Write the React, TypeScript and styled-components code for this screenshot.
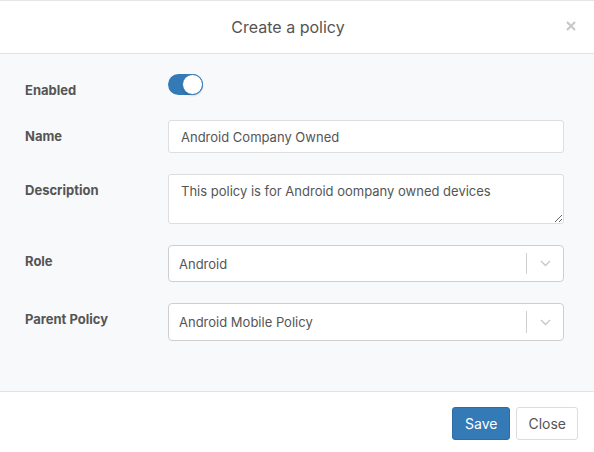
import React, { useState } from "react";
import styled, { createGlobalStyle } from "styled-components";

const GlobalStyle = createGlobalStyle`
  html, body {
    margin: 0;
    padding: 0;
    background: #ffffff;
  }
  body {
    font-family: Inter, "Noto Sans", "Liberation Sans", sans-serif;
    color: #555555;
  }
`;

const Modal = styled.div`
  width: 594px;
  height: 452px;
  display: flex;
  flex-direction: column;
  background: #ffffff;
`;

const Header = styled.div`
  height: 52px;
  padding-right: 18px;
  border-top: 1px solid #e6e6e6;
  border-bottom: 1px solid #e3e3e3;
  display: flex;
  align-items: center;
  justify-content: center;
  position: relative;
`;

const Title = styled.h4`
  margin: 0;
  font-size: 16px;
  font-weight: 400;
  color: #555555;
`;

const CloseX = styled.button`
  position: absolute;
  right: 15px;
  top: 17px;
  width: 16px;
  height: 16px;
  padding: 0;
  border: none;
  background: none;
  color: #c8c8c8;
  cursor: pointer;
  display: flex;
  align-items: center;
  justify-content: center;
`;

const Body = styled.div`
  flex: 1;
  background: #f8f9fb;
  padding: 20px 30px 0 25px;
  display: flex;
  flex-direction: column;
  gap: 21px;
  border-bottom: 1px solid #e3e3e3;
`;

const Row = styled.div<{ $minHeight?: number }>`
  display: grid;
  grid-template-columns: 143px 1fr;
  align-items: start;
  min-height: ${(p) => (p.$minHeight ? `${p.$minHeight}px` : "auto")};
`;

const Label = styled.label`
  font-size: 13px;
  font-weight: 700;
  line-height: 16px;
  padding-top: 8px;
  color: #555555;
`;

const Track = styled.button<{ $on: boolean }>`
  width: 35px;
  height: 21px;
  border-radius: 11px;
  border: none;
  padding: 0;
  background: ${(p) => (p.$on ? "#337ab7" : "#cccccc")};
  display: flex;
  align-items: center;
  justify-content: ${(p) => (p.$on ? "flex-end" : "flex-start")};
  cursor: pointer;
`;

const Knob = styled.span`
  width: 19px;
  height: 19px;
  border-radius: 50%;
  background: #ffffff;
  border: 1px solid #337ab7;
  box-shadow: 0 1px 2px rgba(0, 0, 0, 0.15);
`;

const TextInput = styled.input`
  box-sizing: border-box;
  width: 100%;
  height: 33px;
  padding: 0 12px;
  border: 1px solid #dedede;
  border-radius: 3px;
  background: #ffffff;
  font-family: inherit;
  font-size: 13px;
  color: #555555;
  outline: none;
`;

const TextArea = styled.textarea`
  box-sizing: border-box;
  width: 100%;
  height: 50px;
  padding: 8px 12px;
  border: 1px solid #dedede;
  border-radius: 3px;
  background: #ffffff;
  font-family: inherit;
  font-size: 13px;
  line-height: 16px;
  color: #555555;
  outline: none;
`;

const SelectBox = styled.div<{ $height: number }>`
  box-sizing: border-box;
  width: 100%;
  height: ${(p) => p.$height}px;
  border: 1px solid #cfcfcf;
  border-radius: 4px;
  background: #ffffff;
  display: flex;
  align-items: center;
`;

const SelectValue = styled.div`
  flex: 1;
  padding-left: 10px;
  font-size: 13px;
  color: #555555;
`;

const Separator = styled.span`
  width: 1px;
  align-self: stretch;
  margin: 7px 0;
  background: #d0d0d0;
`;

const Indicator = styled.div`
  width: 36px;
  display: flex;
  align-items: center;
  justify-content: center;
  color: #c8c8c8;
`;

const Footer = styled.div`
  height: 60px;
  display: flex;
  justify-content: flex-end;
  align-items: flex-start;
  gap: 6px;
  padding: 15px 16px 0 0;
  box-sizing: border-box;
`;

const Button = styled.button<{ $primary?: boolean }>`
  height: 33px;
  padding: 0 ${(p) => (p.$primary ? 12 : 11)}px;
  border-radius: 3px;
  border: 1px solid ${(p) => (p.$primary ? "#2e6da4" : "#dddddd")};
  background: ${(p) => (p.$primary ? "#337ab7" : "#ffffff")};
  color: ${(p) => (p.$primary ? "#ffffff" : "#555555")};
  font-family: inherit;
  font-size: 14px;
  cursor: pointer;
`;

const Chevron = () => (
  <svg width="11" height="7" viewBox="0 0 11 7" fill="none">
    <path d="M1 1l4.5 4.5L10 1" stroke="currentColor" strokeWidth="1.4" />
  </svg>
);

const Select = ({ value, height }: { value: string; height: number }) => (
  <SelectBox $height={height}>
    <SelectValue>{value}</SelectValue>
    <Separator />
    <Indicator>
      <Chevron />
    </Indicator>
  </SelectBox>
);

const App = () => {
  const [enabled, setEnabled] = useState(true);

  return (
    <>
      <GlobalStyle />
      <Modal>
        <Header>
          <Title>Create a policy</Title>
          <CloseX aria-label="Close">
            <svg width="10" height="10" viewBox="0 0 10 10">
              <path d="M1 1l8 8M9 1l-8 8" stroke="currentColor" strokeWidth="2.2" />
            </svg>
          </CloseX>
        </Header>
        <Body>
          <Row $minHeight={25}>
            <Label>Enabled</Label>
            <Track $on={enabled} onClick={() => setEnabled(!enabled)}>
              <Knob />
            </Track>
          </Row>
          <Row>
            <Label>Name</Label>
            <TextInput defaultValue="Android Company Owned" />
          </Row>
          <Row>
            <Label>Description</Label>
            <TextArea defaultValue="This policy is for Android oompany owned devices" />
          </Row>
          <Row>
            <Label>Role</Label>
            <Select value="Android" height={37} />
          </Row>
          <Row>
            <Label>Parent Policy</Label>
            <Select value="Android Mobile Policy" height={38} />
          </Row>
        </Body>
        <Footer>
          <Button $primary>Save</Button>
          <Button>Close</Button>
        </Footer>
      </Modal>
    </>
  );
};

export default App;
